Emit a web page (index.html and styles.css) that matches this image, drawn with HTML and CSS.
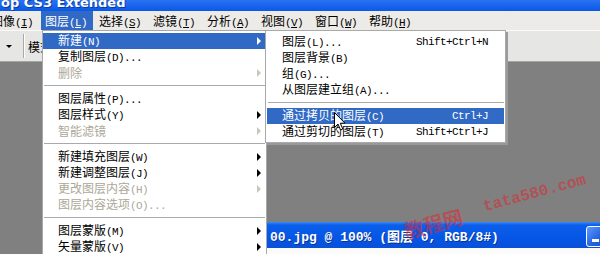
FILE: index.html
```html
<!DOCTYPE html>
<html lang="zh-CN">
<head>
    <meta charset="UTF-8">
    <title>Photoshop CS3 Extended</title>
    <link rel="stylesheet" href="styles.css">
</head>
<body>
<div class="app">
    <div class="titlebar"><span>op CS3 Extended</span></div>

    <nav class="menubar">
        <a>图像<span class="k">(<u>I</u>)</span></a>
        <a class="open">图层<span class="k">(<u>L</u>)</span></a>
        <a>选择<span class="k">(<u>S</u>)</span></a>
        <a>滤镜<span class="k">(<u>T</u>)</span></a>
        <a>分析<span class="k">(<u>A</u>)</span></a>
        <a>视图<span class="k">(<u>V</u>)</span></a>
        <a>窗口<span class="k">(<u>W</u>)</span></a>
        <a>帮助<span class="k">(<u>H</u>)</span></a>
    </nav>

    <div class="toolbar">
        <span class="drop"></span>
        <span class="vsep"></span>
        <span class="label">模式:</span>
    </div>

    <div class="workspace">
        <div class="doc">
            <div class="doc-title">
                <span class="doc-name">00.jpg @ 100% (图层 0, RGB/8#)</span>
                <div class="winbtns">
                    <span class="wbtn min"></span>
                    <span class="wbtn max"></span>
                </div>
            </div>
            <div class="doc-body"></div>
        </div>
    </div>

    <!-- 图层 menu -->
    <ul class="menu main-menu">
        <li class="item hot"><span>新建<span class="k">(N)</span></span><i class="arrow"></i></li>
        <li class="item"><span>复制图层<span class="k">(D)...</span></span></li>
        <li class="item off"><span>删除</span><i class="arrow"></i></li>
        <li class="sep"></li>
        <li class="item"><span>图层属性<span class="k">(P)...</span></span></li>
        <li class="item"><span>图层样式<span class="k">(Y)</span></span><i class="arrow"></i></li>
        <li class="item off"><span>智能滤镜</span><i class="arrow"></i></li>
        <li class="sep"></li>
        <li class="item"><span>新建填充图层<span class="k">(W)</span></span><i class="arrow"></i></li>
        <li class="item"><span>新建调整图层<span class="k">(J)</span></span><i class="arrow"></i></li>
        <li class="item off"><span>更改图层内容<span class="k">(H)</span></span><i class="arrow"></i></li>
        <li class="item off"><span>图层内容选项<span class="k">(O)...</span></span></li>
        <li class="sep"></li>
        <li class="item"><span>图层蒙版<span class="k">(M)</span></span><i class="arrow"></i></li>
        <li class="item"><span>矢量蒙版<span class="k">(V)</span></span><i class="arrow"></i></li>
    </ul>

    <!-- 新建 submenu -->
    <ul class="menu sub-menu">
        <li class="item"><span>图层<span class="k">(L)...</span></span><span class="k key">Shift+Ctrl+N</span></li>
        <li class="item"><span>图层背景<span class="k">(B)</span></span></li>
        <li class="item"><span>组<span class="k">(G)...</span></span></li>
        <li class="item"><span>从图层建立组<span class="k">(A)...</span></span></li>
        <li class="sep"></li>
        <li class="item hot"><span>通过拷贝的图层<span class="k">(C)</span></span><span class="k key">Ctrl+J</span></li>
        <li class="item"><span>通过剪切的图层<span class="k">(T)</span></span><span class="k key">Shift+Ctrl+J</span></li>
    </ul>

    <svg class="cursor" width="13" height="20" viewBox="0 0 13 20">
        <path d="M0.5 0.5 L0.5 15.5 L4 12 L6.5 18 L8.8 17 L6.3 11.2 L11 11.2 Z" fill="#fff" stroke="#000" stroke-width="1"/>
    </svg>

    <span class="wm wm-cn">教程网</span>
    <span class="wm wm-url">tata580.com</span>
</div>
</body>
</html>
```

FILE: styles.css
```css
body{
    margin: 0;
    width: 600px;
    height: 254px;
    overflow: hidden;
    font-family: "Noto Sans CJK SC", sans-serif;
    font-size: 12px;
}
.app{
    position: relative;
    height: 254px;
    display: flex;
    flex-direction: column;
    overflow: hidden;
}
.k{
    font-family: "Liberation Mono", monospace;
    font-size: 11px;
    letter-spacing: -0.6px;
}

/* window title */
.titlebar{
    height: 11px;
    flex: none;
    overflow: hidden;
    background: linear-gradient(#2a72f2, #0a58e6);
    color: #fff;
    font: bold 13px "DejaVu Sans", sans-serif;
}
.titlebar span{
    display: block;
    line-height: 16px;
    margin-top: -5px;
    padding-left: 1px;
    text-shadow: 1px 1px #0b3aa0;
}

/* menu bar */
.menubar{
    height: 19px;
    flex: none;
    display: flex;
    background: #ecebe8;
}
.menubar a{
    width: 48px;
    flex: none;
    margin-right: 2px;
    padding-left: 4px;
    line-height: 19px;
    color: #000;
    white-space: nowrap;
}
.menubar a:first-child{
    margin-left: -13px;
}
.menubar a.open{
    background: #316ac5;
    color: #fff;
}

/* options bar */
.toolbar{
    height: 30px;
    flex: none;
    display: flex;
    align-items: center;
    background: #e6e6e4;
    border-top: 1px solid #fafafa;
    border-bottom: 1px solid #a4a4a4;
}
.drop{
    margin-left: 6px;
    border-left: 3px solid transparent;
    border-right: 3px solid transparent;
    border-top: 3px solid #000;
}
.vsep{
    width: 1px;
    height: 24px;
    margin-left: 11px;
    background: #a9a9a9;
    border-right: 1px solid #fff;
}
.label{
    margin-left: 3px;
    font-size: 12px;
}

/* workspace */
.workspace{
    flex: 1;
    background: #808080;
}
.doc{
    margin: 160px -34px 0 120px;
}
.doc-title{
    height: 26px;
    display: flex;
    align-items: center;
    padding: 0 3px 0 150px;
    background: linear-gradient(#3d8bf6 0, #0b5fea 3px, #0556e6 60%, #0a50d8 100%);
    color: #fff;
}
.doc-name{
    font: bold 13px "Liberation Mono", "Noto Sans CJK SC", monospace;
    white-space: pre;
    text-shadow: 1px 1px #0a3596;
}
.winbtns{
    margin-left: auto;
    display: flex;
    gap: 3px;
    padding-top: 3px;
}
.wbtn{
    position: relative;
    width: 19px;
    height: 19px;
    border: 1px solid #fff;
    border-radius: 3px;
    background: linear-gradient(135deg, #5b9bff, #2460e0 60%, #1a55d6);
}
.wbtn.min::after{
    content: "";
    position: absolute;
    left: 5px;
    bottom: 4px;
    width: 7px;
    height: 3px;
    background: #fff;
}
.wbtn.max::after{
    content: "";
    position: absolute;
    left: 4px;
    top: 4px;
    width: 9px;
    height: 8px;
    border: 1px solid #fff;
    border-top-width: 3px;
}
.doc-body{
    height: 20px;
    background: #fbfbfb;
}

/* drop-down menus */
.menu{
    position: absolute;
    margin: 0;
    list-style: none;
    background: #fff;
    border: 1px solid #a9a9a9;
    color: #000;
}
.main-menu{
    left: 42px;
    top: 30px;
    width: 222px;
    padding: 2px 1px 0 0;
}
.sub-menu{
    left: 265px;
    top: 30px;
    width: 237px;
    padding: 3px 1px 2px 1px;
    box-shadow: 2px 2px 0 #9a9a9a;
}
.item{
    height: 16px;
    display: flex;
    align-items: center;
    padding: 0 4px 0 15px;
    line-height: 16px;
    white-space: nowrap;
}
.sub-menu .item{
    padding-right: 16px;
}
.item.hot{
    background: #316ac5;
    color: #fff;
}
.item.off{
    color: #aca899;
}
.arrow{
    margin-left: auto;
    border-left: 4px solid currentColor;
    border-top: 4px solid transparent;
    border-bottom: 4px solid transparent;
}
.item.off .arrow{
    border-left-color: #c8c6bc;
}
.key{
    margin-left: auto;
}
.sep{
    height: 1px;
    margin: 4px 0 5px 1px;
    background: #a9a9a9;
}

.cursor{
    position: absolute;
    left: 334px;
    top: 112px;
}

/* site watermark */
.wm{
    position: absolute;
    color: rgba(220, 40, 50, 0.55);
    font-weight: bold;
    transform: rotate(-15deg);
    transform-origin: left bottom;
    white-space: nowrap;
}
.wm-cn{
    left: 408px;
    top: 216px;
    font-size: 20px;
}
.wm-url{
    left: 486px;
    top: 198px;
    font: bold 16px "Liberation Mono", monospace;
}
```
